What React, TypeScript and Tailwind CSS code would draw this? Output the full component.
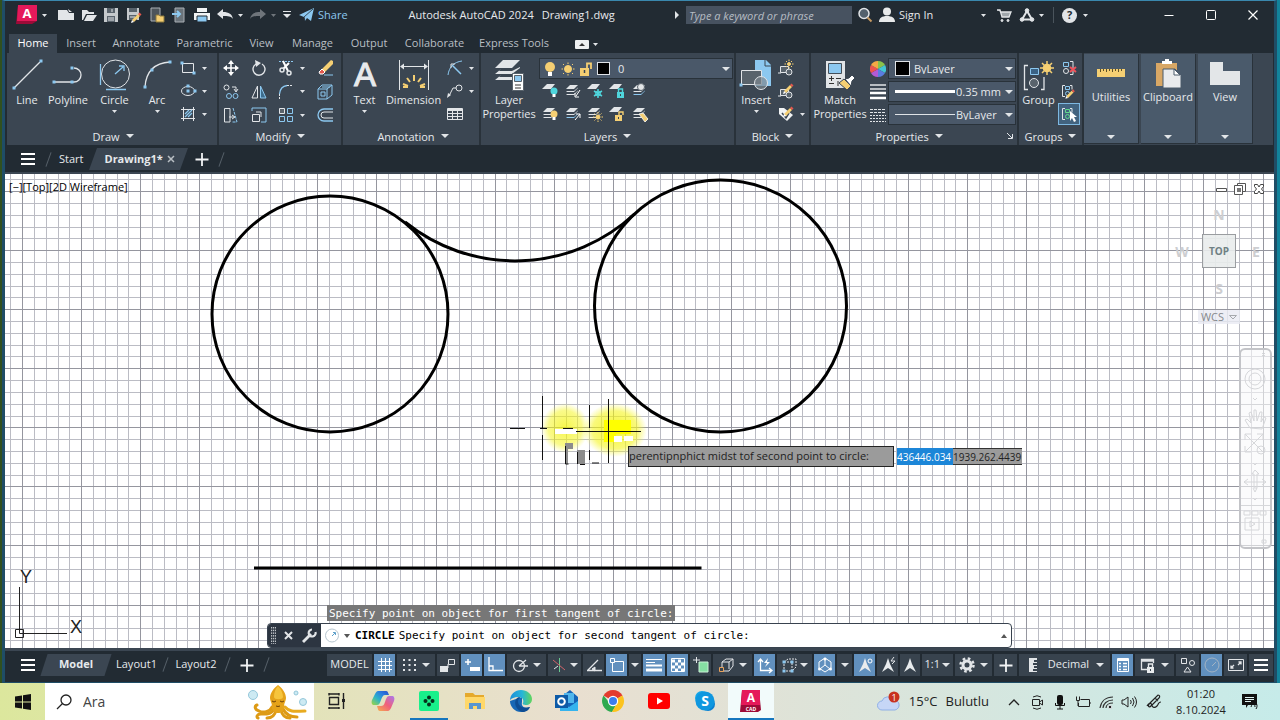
import React, { useState } from "react";
import clsx from "clsx";

type IconProps = { size?: number; children: React.ReactNode };

type Tool = { label: string; icon: React.ReactNode; caret?: boolean };

const LIGHT = "#e2e5e8";
const BLUE = "#8cc8f0";
const GOLD = "#f5cf73";

const Icon = ({ size = 16, children }: IconProps) => (
  <svg
    width={size}
    height={size}
    viewBox={`0 0 ${size} ${size}`}
    fill="none"
    stroke={LIGHT}
    className="shrink-0 overflow-visible"
  >
    {children}
  </svg>
);

const Caret = ({ small = false }: { small?: boolean }) =>
  small ? (
    <svg width="5" height="3" viewBox="0 0 5 3" className="shrink-0">
      <path d="M0 0h5L2.500 3z" fill={LIGHT} />
    </svg>
  ) : (
    <svg width="8" height="4" viewBox="0 0 8 4" className="shrink-0">
      <path d="M0 0h8L4 4z" fill={LIGHT} />
    </svg>
  );

const Node = ({ x, y }: { x: number; y: number }) => (
  <rect x={x - 1.5} y={y - 1.5} width="3" height="3" fill={BLUE} stroke="none" />
);

const Pencil = () => (
  <g stroke="none">
    <path d="M7 9l6-6 2 2-6 6z" fill={GOLD} />
    <path d="M13 3l1.500-1.500 2 2L15 5z" fill="#e2574c" />
    <path d="M7 9l-1 3 3-1z" fill="#fff" />
  </g>
);

const Sheets = ({ accent = LIGHT }: { accent?: string }) => (
  <g stroke="none">
    <path d="M5 2h8l-4 4H1z" fill={LIGHT} />
    <path d="M3.500 6.500L1 9h8l4-4v-.5L9 8H2z" fill={LIGHT} />
    <path d="M3.500 9.500L1 12h8l4-4v-.5L9 11H2z" fill={accent} />
  </g>
);

const OneSheet = () => <path d="M5 1h8L9 6H0z" fill={LIGHT} stroke="none" />;

const Bulb = ({ x, y, color }: { x: number; y: number; color: string }) => (
  <g stroke="none">
    <circle cx={x} cy={y} r="3.5" fill={color} />
    <rect x={x - 1.5} y={y + 3} width="3" height="3" fill="#fff" />
  </g>
);

const SunMark = ({ x, y, r = 2 }: { x: number; y: number; r?: number }) => (
  <g stroke={GOLD}>
    <circle cx={x} cy={y} r={r} fill={GOLD} />
    <path
      d={`M${x} ${y - r - 3}v1.500M${x} ${y + r + 1.5}v1.500M${x - r - 3} ${y}h1.500M${x + r + 1.5} ${y}h1.500M${x - r - 1.5} ${y - r - 1.5}l1 1M${x + r + 0.5} ${y + r + 0.5}l1 1M${x - r - 1.5} ${y + r + 1.5}l1-1M${x + r + 0.5} ${y - r - 0.5}l1-1`}
    />
  </g>
);

const Lock = ({ x, y, color, open = false }: { x: number; y: number; color: string; open?: boolean }) => (
  <g>
    <rect x={x} y={y} width="7" height="6" fill={color} stroke="none" />
    <path
      d={open ? `M${x + 4} ${y}v-3h4v3` : `M${x + 1.5} ${y}v-3h4v3`}
      stroke={color}
      strokeWidth="1.4"
    />
    <path d={`M${x + 3.5} ${y + 2}v2`} stroke="#3b4652" />
  </g>
);

const Burger = () => (
  <Icon>
    <path d="M1 3h14M1 8h14M1 13h14" stroke="#fff" strokeWidth="2" />
  </Icon>
);

const Plus = () => (
  <Icon>
    <path d="M8 2v13M1.500 8.500h13" stroke="#f2f4f5" strokeWidth="1.8" />
  </Icon>
);

const Slash = () => <span className="h-[15px] w-px rotate-[20deg] bg-[#566069]" />;

/* ---------- title bar ---------- */

const fileTools: Tool[] = [
  {
    label: "New",
    icon: <Icon><path d="M0 3h9l2 3h5v7H0z" fill={LIGHT} stroke="none" /><path d="M10 2l4 3h-3z" fill={LIGHT} stroke="none" /></Icon>,
  },
  {
    label: "Open",
    icon: <Icon><path d="M1 3h5l2 2h5v2H5l-3 6H1z" fill={LIGHT} stroke="none" /><path d="M6 8h10l-4 6H3z" fill={LIGHT} stroke="none" /></Icon>,
  },
  {
    label: "Save",
    icon: <Icon><path d="M1 1h14v14H1z" fill="#c5c9cc" stroke="none" /><path d="M4 1h8v5H4zM4 9h8v6H4z" fill="#59636c" stroke="none" /><path d="M5 11h6M5 13h6M9 2v3" /></Icon>,
  },
  {
    label: "Save As",
    icon: <Icon><path d="M1 1h12v12H1z" fill="#c5c9cc" stroke="none" /><path d="M3 1h8v4H3zM3 8h8v5H3z" fill="#59636c" stroke="none" /><path d="M4 10h5" /><g transform="translate(-1 4)"><Pencil /></g></Icon>,
  },
  {
    label: "Open from Web & Mobile",
    icon: <Icon><path d="M2 1h9v13H2z" fill="#4d555b" stroke="#a9afb4" /><path d="M7 8h3l1 1h4v6H7z" fill={GOLD} stroke="#8d7a3e" /></Icon>,
  },
  {
    label: "Save to Web & Mobile",
    icon: <Icon><path d="M4 1h9v14H4z" fill="#6a737a" stroke="#a9afb4" /><path d="M1 7h7M6 4l3 3-3 3" stroke={BLUE} strokeWidth="2" /></Icon>,
  },
  {
    label: "Plot",
    icon: <Icon><path d="M3 1h10v4H3zM0 6h16v7H0z" fill="#f1f3f4" stroke="none" /><path d="M3 9h10v6H3z" fill={BLUE} stroke="#222b33" /></Icon>,
  },
];

const TitleBar = () => (
  <header className="flex h-[28px] items-center text-[11px]">
    <button aria-label="Application menu" className="ml-[11px] flex w-[34px] items-center gap-1">
      <svg width="22" height="20" viewBox="0 0 22 20">
        <path d="M2 1h18l1 15-5 3H0z" fill="#9d0b38" />
        <path d="M2 0h19v16H1z" fill="#e5195a" />
        <text x="11" y="13" textAnchor="middle" fontFamily="Open Sans" fontWeight="700" fontSize="13" fill="#fff">A</text>
      </svg>
      <Caret small />
    </button>
    <div className="ml-[5px] grid w-[158px] grid-cols-7 justify-items-center">
      {fileTools.map((t) => (
        <button key={t.label} aria-label={t.label}>{t.icon}</button>
      ))}
    </div>
    <button aria-label="Undo" className="ml-1 flex items-center gap-[5px]">
      <Icon><path d="M0 7l6-5v3c6 0 9 2 10 7-2-3-5-3-10-3v3z" fill={LIGHT} stroke="none" /></Icon>
      <Caret small />
    </button>
    <button aria-label="Redo" className="ml-[7px] flex items-center gap-[5px] opacity-40">
      <Icon><path d="M16 7l-6-5v3c-6 0-9 2-10 7 2-3 5-3 10-3v3z" fill={LIGHT} stroke="none" /></Icon>
      <Caret small />
    </button>
    <button aria-label="Customize toolbar" className="ml-[7px]">
      <svg width="8" height="8" viewBox="0 0 8 8">
        <path d="M0 .5h8" stroke={LIGHT} />
        <path d="M0 3h8L4 7z" fill={LIGHT} />
      </svg>
    </button>
    <button className="ml-2 flex items-center gap-[3px] text-[#8cc8f0]">
      <Icon><path d="M0 8L15 1l-3 13-4-3-2 3-1-4z" fill={BLUE} stroke="none" /><path d="M14 2L5 10l1 4" stroke="#222b33" strokeWidth=".8" /></Icon>
      Share
    </button>
    <h1 className="ml-[61px] flex gap-2">
      <span>Autodesk AutoCAD 2024</span>
      <span>Drawing1.dwg</span>
    </h1>
    <div className="ml-auto flex items-center">
      <svg width="5" height="8" viewBox="0 0 5 8" className="mr-1.5">
        <path d="M0 0l4 4-4 4z" fill={LIGHT} />
      </svg>
      <input
        aria-label="Search"
        placeholder="Type a keyword or phrase"
        className="h-[18px] w-[166px] bg-[#475260] px-[3px] italic text-white outline-none placeholder:text-[#b6bcc3]"
      />
      <button aria-label="Search help" className="ml-[5px]">
        <Icon><circle cx="7" cy="6.500" r="5" fill="#53616d" strokeWidth="1.500" /><path d="M10.500 10.500l4 4" stroke="#c59a62" strokeWidth="2" /></Icon>
      </button>
      <button className="ml-[6px] flex items-center gap-[4px]">
        <Icon><circle cx="8" cy="4.500" r="4" fill="#e8eaeb" stroke="none" /><path d="M0 15c0-4 3-6 8-6s8 2 8 6z" fill="#e8eaeb" stroke="none" /></Icon>
        <span className="w-[78px] text-left">Sign In</span>
        <Caret small />
      </button>
      <button aria-label="App store" className="ml-2.5">
        <Icon><path d="M1 3h3l2 7h7l2-5H5" fill="#9fa6ab" strokeWidth="1.300" /><circle cx="6" cy="13.500" r="1" fill={LIGHT} /><circle cx="12" cy="13.500" r="1" fill={LIGHT} /></Icon>
      </button>
      <button aria-label="Autodesk App" className="ml-[7px] flex items-center gap-1">
        <Icon><path d="M8 4L3 12.500h10z" strokeWidth="2" /><g fill={LIGHT}><circle cx="8" cy="3.500" r="1.800" /><circle cx="3" cy="12.500" r="1.800" /><circle cx="13" cy="12.500" r="1.800" /></g></Icon>
        <Caret small />
      </button>
      <span className="ml-[9px] h-4 w-px bg-[#4a545c]" />
      <button aria-label="Help" className="ml-2 flex items-center gap-[6px]">
        <span className="flex size-[15px] items-center justify-center rounded-full bg-[#e2e5e8] font-bold text-[#222b33]">?</span>
        <Caret small />
      </button>
    </div>
    <div className="ml-[60px] flex">
      <button aria-label="Minimize" className="flex w-[42px] justify-center"><Icon><path d="M3.500 8.500h9" stroke="#fff" /></Icon></button>
      <button aria-label="Restore" className="flex w-[42px] justify-center"><Icon><rect x="3.500" y="3.500" width="9" height="9" rx="1" stroke="#fff" /></Icon></button>
      <button aria-label="Close" className="flex w-[42px] justify-center"><Icon><path d="M3.500 3.500l9 9M12.500 3.500l-9 9" stroke="#fff" strokeWidth="1.200" /></Icon></button>
    </div>
  </header>
);

const ribbonTabs = [
  { name: "Home", width: "w-[48px]" },
  { name: "Insert", width: "w-[48px]" },
  { name: "Annotate", width: "w-[62px]" },
  { name: "Parametric", width: "w-[75px]" },
  { name: "View", width: "w-[39px]" },
  { name: "Manage", width: "w-[63px]" },
  { name: "Output", width: "w-[50px]" },
  { name: "Collaborate", width: "w-[81px]" },
  { name: "Express Tools", width: "w-[78px]" },
];

/* ---------- ribbon ---------- */

const modifyTools: Tool[] = [
  { label: "Move", icon: <Icon><path d="M8 2v12M2 8h12" stroke="#fff" strokeWidth="1.500" /><path d="M8 0l3 4H5zM8 16l3-4H5zM0 8l4-3v6zM16 8l-4-3v6z" fill="#fff" stroke="none" /></Icon> },
  { label: "Rotate", icon: <Icon><path d="M5 4a6 6 0 1 0 6 0" strokeWidth="1.400" /><path d="M4 0l6 3-5 4z" fill={LIGHT} stroke="none" /></Icon> },
  { label: "Trim", caret: true, icon: <Icon><path d="M1 1.500h14" stroke={BLUE} strokeDasharray="2 1" /><path d="M5 1l5 10M11 3l-6 6" stroke="#fff" strokeWidth="2" /><circle cx="4" cy="10" r="2" strokeWidth="1.500" /><circle cx="11" cy="13" r="2" strokeWidth="1.500" /></Icon> },
  { label: "Erase", icon: <Icon><path d="M5 9l9-9 2 1v3l-8 8z" fill={GOLD} stroke="none" /><path d="M5 9l3 3-2 2H3l-1-2z" fill="#e2574c" stroke="#fff" /><path d="M7 15h9" stroke={BLUE} /></Icon> },
  { label: "Copy", icon: <Icon><circle cx="3.500" cy="3.500" r="2.500" /><path d="M9 3h4v4M11 5l2 3 2-3" /><g stroke={BLUE}><circle cx="6" cy="12" r="2.500" /><circle cx="12.500" cy="12" r="2.500" /></g></Icon> },
  { label: "Mirror", icon: <Icon><path d="M6.500 2v12H1z" /><path d="M9.500 2v12H15z" stroke={BLUE} fill="#3e6d8d" /></Icon> },
  { label: "Fillet", caret: true, icon: <Icon><path d="M1.500 10C2 5 5 2 9 1.500" stroke={BLUE} strokeWidth="1.300" /><path d="M9 1.500h6M1.500 10v6" strokeDasharray="2 1" /></Icon> },
  { label: "Explode", icon: <Icon><path d="M1 5h9v10H1zM4 8h4v4H4z" stroke={BLUE} /><path d="M1 5l4-4h10l-5 4M15 1v10l-5 4M5 3h8" stroke={BLUE} /></Icon> },
  { label: "Stretch", icon: <Icon><path d="M1.500 1.500H7V15H1.500zM6 10h5M9 8l3 2-3 2" /><path d="M10 1l4 14H9" stroke={BLUE} strokeDasharray="3 1" /></Icon> },
  { label: "Scale", icon: <Icon><path d="M1 4V1h14v14h-5" stroke={BLUE} /><path d="M1.500 7.500h7v7h-7z" /><path d="M5 5h5v5" /></Icon> },
  { label: "Array", caret: true, icon: <Icon><path d="M1.500 1.500h5v5h-5z" fill="#59636c" /><g stroke={BLUE}><path d="M9.500 1.500h5v5h-5zM1.500 9.500h5v5h-5zM9.500 9.500h5v5h-5z" /></g></Icon> },
  { label: "Offset", icon: <Icon><path d="M16 2H7a6 6 0 0 0 0 12h9" stroke={BLUE} strokeWidth="1.300" /><path d="M16 5H7a3 3 0 0 0 0 6h9" /></Icon> },
];

const drawTools: Tool[] = [
  { label: "Rectangle", caret: true, icon: <Icon><path d="M2.500 3.500h11v9h-11z" /><Node x={2} y={3} /><Node x={14} y={13} /></Icon> },
  { label: "Ellipse", caret: true, icon: <Icon><ellipse cx="8" cy="8" rx="6.500" ry="4.500" /><Node x={8} y={8} /><Node x={15} y={8} /><Node x={8} y={3} /></Icon> },
  { label: "Hatch", caret: true, icon: <Icon><path d="M3.500 1v14M13.500 1v14M1 3.500h14M1 12.500h14" /><path d="M5 8l4-4M5 11l7-7M8 11l4-4" stroke={BLUE} strokeWidth="1.300" /></Icon> },
];

const annotationTools: Tool[] = [
  { label: "Linear", caret: true, icon: <Icon><path d="M1 15C2 7 7 2 15 1" stroke={BLUE} /><path d="M5 5l9 9" stroke={BLUE} strokeWidth="1.500" /><path d="M4 8V4h4" /></Icon> },
  { label: "Leader", caret: true, icon: <Icon><circle cx="12" cy="5" r="3" /><path d="M9 5H6l-4 8" /><path d="M0 15l1-5 3 2z" fill={LIGHT} stroke="none" /></Icon> },
  { label: "Table", icon: <Icon><path d="M.5 2.500h15v11H.5zM.5 7.500h15M.5 10.500h15M5.500 5v9M10.500 5v9" /><path d="M1 4h14" strokeWidth="2" /></Icon> },
];

const layerTools: Tool[] = [
  { label: "Off", icon: <Icon><OneSheet /><Bulb x={12} y={8} color="#4fd5dc" /></Icon> },
  { label: "Isolate", icon: <Icon><Sheets /><path d="M15 7l-4 6M10 10v4h4" stroke="#fff" /></Icon> },
  { label: "Freeze", icon: <Icon><OneSheet /><path d="M11 6v9M7 8l8 5M15 8l-8 5" stroke="#4fd5dc" strokeWidth="1.500" /><circle cx="11" cy="10.500" r="2.500" stroke="#4fd5dc" /></Icon> },
  { label: "Lock", icon: <Icon><OneSheet /><Lock x={8} y={9} color="#4fd5dc" /></Icon> },
  { label: "Make Current", icon: <Icon><Sheets accent={BLUE} /><circle cx="9" cy="4" r="3.500" fill="#e3e6e8" stroke="#59636c" /></Icon> },
  { label: "Turn All On", icon: <Icon><Sheets /><Bulb x={12} y={8} color={GOLD} /></Icon> },
  { label: "Unisolate", icon: <Icon><Sheets accent={BLUE} /><path d="M10 14l5-6M11 8h4v4" stroke="#fff" /></Icon> },
  { label: "Thaw All", icon: <Icon><Sheets /><SunMark x={11} y={11} /></Icon> },
  { label: "Unlock", icon: <Icon><OneSheet /><Lock x={6} y={9} color={GOLD} open /></Icon> },
  { label: "Match Layer", icon: <Icon><Sheets /><path d="M7 8l4-1 5 6-3 3z" fill={GOLD} stroke="#fff" strokeWidth=".8" /></Icon> },
];

const BlockShape = () => (
  <g>
    <path d="M2.500 6.500h8v6h-8z" fill="#59636c" />
    <circle cx="11" cy="12" r="3" fill="#59636c" />
    <path d="M0 13h3" />
  </g>
);

const blockTools: Tool[] = [
  { label: "Create Block", icon: <Icon><BlockShape /><SunMark x={11} y={4} r={1.5} /></Icon> },
  { label: "Edit Block", icon: <Icon><BlockShape /><g transform="translate(-1 -1)"><Pencil /></g></Icon> },
  { label: "Edit Attributes", caret: true, icon: <Icon><path d="M1 2h5l9 7-6 6-8-7z" fill="#f1f3f4" stroke="none" /><path d="M4 7l4 5 3-5" stroke="#3b4652" strokeWidth="1.500" /><g transform="translate(-1 -1)"><Pencil /></g></Icon> },
];

const GroupShape = ({ color = BLUE }: { color?: string }) => (
  <g>
    <path d="M4 2.500H1.500v11H4M9 2.500h2v4" />
    <path d="M4.500 3.500h4v3h-4z" stroke={color} />
    <circle cx="6.500" cy="10.500" r="2" stroke={color} />
  </g>
);

const groupTools: Tool[] = [
  { label: "Ungroup", icon: <Icon><path d="M9 1.500h3v13H9" /><path d="M2.500 2.500h5v4h-5z" stroke={BLUE} /><circle cx="5" cy="11" r="2.500" /><path d="M9 7l6 5M15 7l-6 5" stroke="#f0535b" strokeWidth="2" /></Icon> },
  { label: "Group Edit", icon: <Icon><GroupShape /><g transform="translate(-1 5) scale(.9)"><Pencil /></g></Icon> },
  { label: "Group Selection On/Off", icon: <Icon><GroupShape color="#62d98d" /><path d="M9 5v10l2-3 2 4 2-1-2-4h3z" fill="#fff" stroke="none" /></Icon> },
];

const SmallTool = ({ tool }: { tool: Tool }) => (
  <button aria-label={tool.label} className="flex h-[22px] items-center gap-1.5">
    {tool.icon}
    {tool.caret && <Caret small />}
  </button>
);

const BigTool = ({ tool, className }: { tool: Tool; className: string }) => (
  <button className={clsx("flex shrink-0 flex-col items-center text-[11px] leading-[14px]", className)}>
    <span className="flex h-[36px] items-center">{tool.icon}</span>
    <span className="whitespace-pre">{tool.label}</span>
    {tool.caret && <span className="flex h-2 items-center"><Caret small /></span>}
  </button>
);

const Panel = ({ title, className, children, launcher }: { title: string; className: string; children: React.ReactNode; launcher?: boolean }) => (
  <section className={clsx("flex shrink-0 flex-col border-r-2 border-[#29323a]", className)}>
    <div className="flex h-[74px] pt-[4px]">{children}</div>
    <div className="flex h-[18px] items-center">
      <button className="mx-auto flex items-center gap-[6px] text-[11px] leading-none">
        {title}
        <Caret />
      </button>
      {launcher && (
        <button aria-label="Properties palette" className="mr-1">
          <svg width="6" height="6" viewBox="0 0 6 6" fill="none" stroke={LIGHT}><path d="M0 0l5 5M5.500 1v4.500H1" /></svg>
        </button>
      )}
    </div>
  </section>
);

const collapsedPanels: Tool[] = [
  {
    label: "Utilities",
    icon: <Icon size={30}><path d="M1 9h28v8H1z" fill={GOLD} stroke="none" /><path d="M4.500 9v3M7.500 9v2M10.500 9v3M13.500 9v2M16.500 9v3M19.500 9v2M22.500 9v3M25.500 9v2" stroke="#5c4f27" /></Icon>,
  },
  {
    label: "Clipboard",
    icon: <Icon size={30}><path d="M3 3h21v23H3z" fill="#d8a765" stroke="none" /><path d="M9 4V1h3v-2h4v2h3v3z" fill="#fff" stroke="none" /><path d="M10 9h12l6 6v13H10z" fill="#e9ebed" stroke="#4a5a6b" /><path d="M21 9v6h6z" fill="#fff" stroke="#4a5a6b" /></Icon>,
  },
  {
    label: "View",
    icon: <Icon size={30}><path d="M0 2h13v9h17v14H0z" fill="#e3e6e8" stroke="none" /></Icon>,
  },
];

const PropertySelect = ({ label, options, children, className }: { label: string; options: string[]; children: React.ReactNode; className?: string }) => (
  <div className={clsx("flex h-[21px] items-center border border-[#29323a] bg-[#4a5869] pr-0.5", className)}>
    {children}
    <select aria-label={label} className="min-w-0 flex-1 appearance-none bg-transparent text-[11px] leading-none outline-none">
      {options.map((o) => (
        <option key={o}>{o}</option>
      ))}
    </select>
    <Caret />
  </div>
);

const Ribbon = () => (
  <div className="mx-0.5 mr-px flex h-[92px] overflow-hidden bg-[#3b4652]">
    <Panel title="Draw" className="w-[212px] pl-0.5">
      <BigTool className="w-[36px]" tool={{ label: "Line", icon: <Icon size={32}><path d="M3 29L29 3" strokeWidth="1.300" /><Node x={3} y={29} /><Node x={30} y={2} /></Icon> }} />
      <BigTool className="w-[46px]" tool={{ label: "Polyline", icon: <Icon size={32}><path d="M2 23h20a7 7 0 0 0 0-14" strokeWidth="1.300" /><Node x={2} y={23} /><Node x={20} y={23} /><Node x={20} y={9} /></Icon> }} />
      <BigTool className="w-[47px]" tool={{ label: "Circle", caret: true, icon: <Icon size={32}><circle cx="16.500" cy="15" r="14" /><path d="M1.500 5v21M7 30.500h20M16 15l8-7M20 7h5v5" stroke={BLUE} strokeWidth="1.300" /></Icon> }} />
      <BigTool className="w-[38px]" tool={{ label: "Arc", caret: true, icon: <Icon size={32}><path d="M4 28C5 12 14 4 29 3" strokeWidth="1.300" /><Node x={4} y={28} /><Node x={11} y={11} /><Node x={29} y={3} /></Icon> }} />
      <div className="ml-1 flex flex-col gap-px">
        {drawTools.map((t) => <SmallTool key={t.label} tool={t} />)}
      </div>
    </Panel>

    <Panel title="Modify" className="w-[124px]">
      <div className="grid grid-cols-[28px_27px_39px_16px] gap-y-px pl-[4px]">
        {modifyTools.map((t) => <SmallTool key={t.label} tool={t} />)}
      </div>
    </Panel>

    <Panel title="Annotation" className="w-[138px] pl-[4px]">
      <BigTool className="w-[35px]" tool={{ label: "Text", caret: true, icon: <Icon size={32}><text x="16" y="27" textAnchor="middle" fontFamily="Liberation Sans" fontSize="33" fill="#e8eaec" stroke="#e8eaec">A</text></Icon> }} />
      <BigTool
        className="w-[63px]"
        tool={{ label: "Dimension", icon: <Icon size={32}><path d="M1.500 1v30M30.500 1v30M3 7.500h26" /><path d="M2 7.500l4-3v6zM30 7.500l-4-3v6z" fill={LIGHT} stroke="none" /><path d="M16 16v6M9 19l3 4M23 19l-3 4M5 25l5 2M27 25l-5 2M5 28h5M22 28h5" stroke={GOLD} strokeWidth="2" /></Icon> }}
      />
      <div className="ml-[2px] flex flex-col gap-px">
        {annotationTools.map((t) => <SmallTool key={t.label} tool={t} />)}
      </div>
    </Panel>

    <Panel title="Layers" className="w-[255px]">
      <BigTool
        className="w-[56px]"
        tool={{
          label: "Layer\nProperties",
          icon: <Icon size={32}><path d="M10 1h17l-8 8H2zM8 10l-6 5h17l8-6v-1l-8 4H6zM8 16l-6 5h17l8-6v-1l-8 4H6z" fill={LIGHT} stroke="none" /><path d="M19.500 14.500h11v17h-11z" fill="#fff" stroke="#59636c" /><path d="M21.500 16.500h7v6h-7z" fill={BLUE} stroke="#59636c" /><path d="M22 26h6M22 29h6" stroke="#333" /></Icon>,
        }}
      />
      <div className="ml-0.5 w-[194px]">
        <PropertySelect label="Layer" options={["0"]} className="mt-px pl-[3px]">
          <div className="mr-[8px] flex gap-[4px]">
            <Icon size={14}><circle cx="7" cy="5" r="5" fill={GOLD} stroke="none" /><path d="M5 10h4v4H5z" fill="#fff" stroke="none" /></Icon>
            <Icon size={14}><SunMark x={7} y={7} r={3.5} /></Icon>
            <Icon size={14}><path d="M1 6h9v8H1z" fill={GOLD} stroke="none" /><path d="M8 6V1.500h4V7" stroke={GOLD} strokeWidth="1.800" /><path d="M5.500 8v3" stroke="#3b4652" strokeWidth="1.500" /></Icon>
            <span className="size-[13px] border border-[#dfe3e7] bg-black" />
          </div>
        </PropertySelect>
        <div className="grid w-[112px] grid-cols-5 gap-y-px justify-items-center pt-px">
          {layerTools.map((t) => <SmallTool key={t.label} tool={t} />)}
        </div>
      </div>
    </Panel>

    <Panel title="Block" className="w-[75px]">
      <BigTool
        className="w-[40px]"
        tool={{
          label: "Insert", caret: true,
          icon: <Icon size={32}><path d="M15 1h11l5 5v21H15z" fill={BLUE} stroke="none" /><path d="M25 1v6h6" stroke="#3b4652" /><path d="M1.500 11.500h20v14h-20z" fill="#59636c" /><circle cx="21" cy="24" r="6.500" fill="#7c868f" fillOpacity=".7" /><Node x={1} y={26} /></Icon>,
        }}
      />
      <div className="ml-0.5 flex flex-col gap-px">
        {blockTools.map((t) => <SmallTool key={t.label} tool={t} />)}
      </div>
    </Panel>

    <Panel title="Properties" className="w-[208px]" launcher>
      <BigTool
        className="w-[58px]"
        tool={{
          label: "Match\nProperties",
          icon: <Icon size={32}><path d="M2 2h19v27H2z" fill={LIGHT} stroke="none" /><path d="M4.500 4.500h13v10h-13z" fill={BLUE} stroke="#44505b" /><path d="M5 19.500h5M7.500 17v5M12 19.500h5M5 24.500h5M14 22v5" stroke="#333" /><path d="M15 24l5-4 7 7-4 4z" fill={GOLD} stroke="#3b4652" /><path d="M21 20l4-1 3-3 3 3-3 3-1 5z" fill="#fff" stroke="#3b4652" /></Icon>,
        }}
      />
      <div className="ml-px flex flex-1 gap-[2px] pt-px pr-px">
        <div className="flex w-[16px] flex-col items-center gap-[7px] pt-[3px]">
          <svg width="16" height="16" viewBox="0 0 16 16">
            <path d="M8 8V0a8 8 0 0 1 7 4z" fill="#8bc34a" />
            <path d="M8 8l7-4a8 8 0 0 1 0 8z" fill="#43c6d4" />
            <path d="M8 8l7 4a8 8 0 0 1-7 4z" fill="#5a7de0" />
            <path d="M8 8v8a8 8 0 0 1-7-4z" fill="#b35ad6" />
            <path d="M8 8l-7 4a8 8 0 0 1 0-8z" fill="#ef5350" />
            <path d="M8 8L1 4a8 8 0 0 1 7-4z" fill="#f6a945" />
          </svg>
          <Icon><path d="M0 1h16M0 5h16" strokeWidth="1.500" /><path d="M0 9h16M0 14h16" stroke="#fff" strokeWidth="2.500" /></Icon>
          <Icon><path d="M0 2.500h16M0 5.500h16" strokeDasharray="3 1" /><path d="M0 8.500h16M0 11.500h16M0 14.500h16" strokeDasharray="2 1" /></Icon>
        </div>
        <div className="flex flex-1 flex-col gap-[2px]">
          <PropertySelect label="Object color" options={["ByLayer"]} className="pl-[6px]">
            <span className="mr-[4px] size-[15px] border border-[#dfe3e7] bg-black" />
          </PropertySelect>
          <PropertySelect label="Lineweight" options={["0.35 mm"]} className="pl-[6px]">
            <span className="mr-px h-[3px] w-[60px] shrink-0 bg-white" />
          </PropertySelect>
          <PropertySelect label="Linetype" options={["ByLayer"]} className="pl-[6px]">
            <span className="mr-px h-px w-[60px] shrink-0 bg-[#dfe3e7]" />
          </PropertySelect>
        </div>
      </div>
    </Panel>

    <Panel title="Groups" className="w-[65px]">
      <BigTool
        className="w-[39px]"
        tool={{
          label: "Group",
          icon: <Icon size={32}><path d="M5 6.500H1.500v24H5M18 30.500h3V18" strokeWidth="1.300" /><path d="M7.500 9.500h8v6h-8z" stroke={BLUE} fill="#3a6285" /><circle cx="11" cy="24" r="4.500" fill="#59636c" /><g stroke={GOLD} strokeWidth="1.500"><circle cx="24" cy="9" r="3.500" fill={GOLD} /><path d="M24 2v14M17 9h14M19 4l10 10M29 4L19 14" /></g></Icon>,
        }}
      />
      <div className="flex flex-col gap-px">
        {groupTools.map((t, i) => (
          <div key={t.label} className={clsx("flex h-[22px] w-[22px] items-center justify-center", i === 2 && "border border-[#7db8e2] bg-[#42637f]")}>
            <SmallTool tool={t} />
          </div>
        ))}
      </div>
    </Panel>

    <div className="flex gap-[2px] pt-px pb-px">
      {collapsedPanels.map((t) => (
        <button key={t.label} className="flex w-[55px] flex-col items-center border-r border-b border-[#29323a] bg-[#4a5a6b] pt-[6px] text-[11px] leading-[14px]">
          <span>{t.icon}</span>
          <span>{t.label}</span>
          <span className="mt-auto mb-1"><Caret /></span>
        </button>
      ))}
    </div>
  </div>
);

/* ---------- drawing area ---------- */

const GRID = 59.07 / 5;

// every fifth line is a major one
const gridLines = (first: number, count: number) =>
  Array.from({ length: count }, (_, i) => ({
    at: Math.round(first + i * GRID) + 0.5,
    major: i % 5 === 0,
  }));

const columns = gridLines(-37, 160);
const rows = gridLines(132, 120);

const gridPath = (major: boolean) =>
  columns.filter((c) => c.major === major).map((c) => `M${c.at} 170V1500`).join("") +
  rows.filter((r) => r.major === major).map((r) => `M0 ${r.at}H1850`).join("");

const Drawing = () => (
  <svg className="block h-full w-full" viewBox="5 174 1270 474" preserveAspectRatio="xMinYMin slice">
    <defs>
      <radialGradient id="glow">
        <stop offset="0" stopColor="#f2f200" stopOpacity=".95" />
        <stop offset=".7" stopColor="#f5f520" stopOpacity=".7" />
        <stop offset="1" stopColor="#f8f840" stopOpacity="0" />
      </radialGradient>
    </defs>
    <path d={gridPath(false)} stroke="#bbbcc4" />
    <path d={gridPath(true)} stroke="#95969f" />

    <g fill="none" stroke="#000" strokeWidth="3">
      <circle cx="330" cy="314" r="118" />
      <circle cx="720.500" cy="306" r="126" />
      <path d="M405 222A175.400 175.400 0 0 0 634.500 214" />
      <path d="M254 568h447.500" />
    </g>

    <ellipse cx="565" cy="428" rx="24" ry="25" fill="url(#glow)" opacity=".75" />
    <ellipse cx="615" cy="430" rx="32" ry="27" fill="url(#glow)" opacity=".85" />
    <path d="M604 420h27v14h-15v8h-12z" fill="#ffff00" />
    <path d="M555 429h22v5h-22zM614 436h8v6h-8zM624 436h9v5h-9z" fill="#fff" />
    <g stroke="#111" fill="none">
      <path d="M542.500 396v33M542.500 435v25M589.500 405v23M589.500 450v10M608.500 399v64" />
      <path d="M510 428.500h15M540 428.500h7M563 428.500h10M576 431.500h65" />
    </g>
    <path d="M565 443h8v6h-5v15h-3zM577 450h8v14h-8z" fill="#8c8c8c" />
    <path d="M565.500 446v18h3M577.500 452v12M580 464.500h5M592 463h7" stroke="#111" fill="none" />

    {/* UCS icon */}
    <g fill="none" stroke="#222">
      <path d="M19.500 587v46.500H67" />
      <path d="M15.500 629.500h8v8h-8z" />
    </g>
    <g fontFamily="Liberation Sans" fontSize="18" fill="#222">
      <text x="20" y="583">Y</text>
      <text x="70" y="633">X</text>
    </g>
  </svg>
);

const compass = [
  { name: "N", place: "col-start-2 row-start-1" },
  { name: "W", place: "col-start-1 row-start-2" },
  { name: "E", place: "col-start-3 row-start-2" },
  { name: "S", place: "col-start-2 row-start-3" },
];

const ViewCube = () => (
  <div className="absolute top-[31px] right-[8px] flex flex-col items-center">
    <div className="grid grid-cols-[20px_54px_20px] grid-rows-[18px_56px_18px] place-items-center text-[14px] font-bold text-[#cdced1]">
      {compass.map((c) => (
        <button key={c.name} className={c.place}>{c.name}</button>
      ))}
      <button className="col-start-2 row-start-2 size-[34px] border border-[#9a9da0] bg-[#e9ecec]/90 text-[10px] text-[#6f8083]">TOP</button>
    </div>
    <button className="mt-[13px] flex h-[14px] items-center gap-[5px] bg-[#e9eaf2]/80 px-[3px] text-[11px] text-[#85888c]">
      WCS
      <svg width="8" height="5" viewBox="0 0 8 5" fill="none" stroke="#a5a8ac"><path d="M.5 .5h7L4 4z" /></svg>
    </button>
  </div>
);

const NavBar = () => (
  <div className="absolute top-[174px] right-[2px] w-[33px] rounded-md border-2 border-[#c3c4c8] bg-[#f8f8fa]/60">
    <svg width="29" height="197" viewBox="0 0 29 197" fill="none" stroke="#d6d7da">
      <path d="M21 3l3 3M24 3l-3 3M12 48l2 2 2-2M12 113l2 2 2-2M12 148l2 2 2-2M0 54.500h29M0 155.500h29" />
      <circle cx="14" cy="29" r="10" />
      <circle cx="14" cy="29" r="6" />
      <path d="M9 78l-5-8 2-1 4 4-2-10 2-1 3 9V60h2l1 11 3-9h2l-1 10 3-5 2 1-4 11z" />
      <path d="M4 84l18 18M22 84L4 102M4 90v-6h6M16 84h6v6M4 96v6h6" />
      <circle cx="20" cy="100" r="4" />
      <path d="M14 120l-3 4h2v14h3v-14h2zM3 132h22M7 129l-4 3 4 3M21 129l4 3-4 3M12 138l2 4 2-4" />
      <path d="M3 161h6v4H3zM11 161h6v4h-6zM19 161h6v4h-6zM4 168h14v12H4zM9 171l5 3-5 3zM21 190h4v3h-4z" />
    </svg>
  </div>
);

const Viewport = () => (
  <main className="relative h-0 min-h-[474px] flex-1 overflow-hidden bg-white text-black">
    <Drawing />
    <button className="absolute top-[5px] left-[4px] text-[11px] leading-[15px]">[−][Top][2D Wireframe]</button>
    <div className="absolute top-[8px] right-[8px] flex gap-[5px]">
      <button aria-label="Minimize drawing"><Icon size={14}><path d="M2.500 6.500h10v3h-10z" stroke="#555" fill="#fff" /></Icon></button>
      <button aria-label="Restore drawing"><Icon size={14}><path d="M4.500 1.500h8v8h-8z" stroke="#555" fill="#fff" /><path d="M1.500 3.500h8v9h-8z" stroke="#555" fill="#fff" /><path d="M4 6h4v4H4z" fill="#777" stroke="none" /></Icon></button>
      <button aria-label="Close drawing"><Icon size={14}><path d="M2.500 2.500h3L7 5l1.500-2.500h3v2L9.500 7l2 2.500v2h-3L7 9l-1.500 2.500h-3v-2L4.500 7l-2-2.500z" stroke="#444" fill="#fff" /></Icon></button>
    </div>
    <ViewCube />
    <NavBar />

    {/* dynamic input */}
    <div className="absolute top-[272px] left-[623px] flex items-center">
      <label htmlFor="coordX" className="flex h-[21px] w-[266px] items-center overflow-hidden border border-[#222] bg-[#9b9b9b] text-[11px] whitespace-nowrap text-[#222]">
        perentipnphict midst tof second point to circle:
      </label>
      <input id="coordX" defaultValue="436446.034" className="ml-[3px] h-[17px] w-[56px] bg-[#1c86d8] text-[10px] text-white outline-none" />
      <input aria-label="Y coordinate" defaultValue="1939.262.4439" className="h-[17px] w-[69px] border-y border-[#333] bg-[#9b9b9b] text-[10px] text-[#222] outline-none" />
    </div>

    {/* command line */}
    <p className="absolute bottom-[27px] left-[322px] bg-[#777] px-0.5 pt-px font-['DejaVu_Sans_Mono',monospace] text-[11px] leading-[15px] text-white">
      Specify point on object for first tangent of circle:
    </p>
    <div className="absolute right-[262px] bottom-0 left-[262px] flex h-[25px] overflow-hidden rounded border border-[#38424e] bg-white">
      <div className="flex w-[53px] items-center gap-[8px] bg-[#2c3541] pl-[3px]">
        <svg width="5" height="17" viewBox="0 0 5 17" stroke={LIGHT} strokeDasharray="1.500 1.200"><path d="M.7 0v17M2.700 0v17M4.700 0v17" /></svg>
        <button aria-label="Close command line"><svg width="9" height="9" viewBox="0 0 9 9"><path d="M1 1l7 7M8 1L1 8" stroke={LIGHT} strokeWidth="2" /></svg></button>
        <button aria-label="Customize"><Icon><path d="M2 14l8-8" strokeWidth="2.800" /><path d="M14.500 4A3.500 3.500 0 1 1 11 1.500" strokeWidth="2.200" /></Icon></button>
      </div>
      <button aria-label="Recent commands" className="flex items-center gap-[3px] pl-1">
        <Icon><circle cx="7" cy="7.500" r="6.500" stroke="#b7c6cf" /><path d="M7 8l3-3M8 4.500h2.500V7" stroke="#5da0ca" /></Icon>
        <svg width="6" height="4" viewBox="0 0 6 4"><path d="M0 0h6L3 4z" fill="#555" /></svg>
      </button>
      <label htmlFor="command" className="flex items-center pt-0.5 pl-[5px] font-['DejaVu_Sans_Mono',monospace] text-[11px] font-bold">CIRCLE</label>
      <input
        id="command"
        defaultValue="Specify point on object for second tangent of circle:"
        className="min-w-0 flex-1 pt-0.5 pl-[4px] font-['DejaVu_Sans_Mono',monospace] text-[11px] outline-none"
      />
      <button aria-label="Show history" className="mr-[4px]">
        <svg width="6" height="4" viewBox="0 0 6 4"><path d="M0 4h6L3 0z" fill="#555" /></svg>
      </button>
    </div>
  </main>
);

/* ---------- status bar ---------- */

type StatusItem = { label: string; width: string; on?: boolean; caret?: boolean; text?: string; icon?: React.ReactNode };

const Compass = ({ mark }: { mark?: React.ReactNode }) => (
  <Icon><path d="M8 1l2 6 4 8-6-4-6 4 4-8z" fill="#e8ebed" stroke="none" />{mark}</Icon>
);

const statusItems: StatusItem[] = [
  { label: "Model space", width: "w-[45px]", text: "MODEL" },
  { label: "Grid", width: "w-[21px]", on: true, icon: <Icon><path d="M4.500 1v14M8.500 1v14M12.500 1v14M1 4.500h14M1 8.500h14M1 12.500h14" stroke="#fff" /></Icon> },
  { label: "Snap", width: "w-[38px]", caret: true, icon: <Icon><path d="M1 3h14M1 8h14M1 13h14" strokeWidth="2" strokeDasharray="2 3.500" /></Icon> },
  { label: "Infer constraints", width: "w-[22px]", icon: <Icon><path d="M0 9h8v6H0z" fill={LIGHT} stroke="none" /><path d="M8.500 2.500h6v5h-6zM8 7v4" /></Icon> },
  { label: "Dynamic input", width: "w-[21px]", on: true, icon: <Icon><path d="M4 2v6M1 5h6" stroke="#fff" strokeWidth="1.500" /><path d="M6 10h10v4H6z" fill="#fff" stroke="none" /></Icon> },
  { label: "Ortho", width: "w-[21px]", on: true, icon: <Icon><path d="M2 0v13.500h14M2 9h4v4" stroke="#fff" strokeWidth="1.300" /></Icon> },
  { label: "Polar tracking", width: "w-[39px]", caret: true, icon: <Icon><circle cx="7" cy="9" r="5.500" strokeWidth="1.300" /><path d="M7 9h9M7 9l7-6" strokeWidth="1.300" /></Icon> },
  { label: "Isodraft", width: "w-[33px]", caret: true, icon: <Icon><path d="M8.500 1v14" stroke="#69c88f" /><path d="M2 3l12 10" stroke="#d5646a" /><path d="M3 12l4-3" /></Icon> },
  { label: "Object snap tracking", width: "w-[21px]", icon: <Icon><path d="M1 13.500h15M2 13L12 3" strokeWidth="1.300" /><path d="M6 12l3-2v4z" fill={LIGHT} /></Icon> },
  { label: "Object snap", width: "w-[21px]", on: true, icon: <Icon><path d="M3.500 4.500h11v10h-11z" stroke="#fff" /><path d="M1.500 1.500h4v4h-4z" fill="#6190be" stroke="#fff" /></Icon> },
  { label: "Object snap settings", width: "w-[12px]", caret: true },
  { label: "Lineweight", width: "w-[22px]", on: true, icon: <Icon><path d="M0 2.500h16M0 5.500h9" stroke="#fff" /><path d="M0 8.500h16" stroke="#fff" strokeWidth="2" /><path d="M0 13h16" stroke="#fff" strokeWidth="3" /></Icon> },
  { label: "Transparency", width: "w-[21px]", on: true, icon: <Icon><path d="M1.500 1.500h13v13h-13z" stroke="#fff" /><path d="M2 4h12M2 10h12" stroke="#fff" strokeWidth="3" strokeDasharray="3 3" /><path d="M5 7h9M5 13h9" stroke="#fff" strokeWidth="3" strokeDasharray="3 3" /></Icon> },
  { label: "Selection cycling", width: "w-[21px]", icon: <Icon><path d="M6 5h9v10H6z" fill="#86e0a3" stroke="#c9f2d6" /><path d="M3.500 0v6M0 3h7" /></Icon> },
  { label: "3D object snap", width: "w-[39px]", caret: true, icon: <Icon><path d="M4 5l4-3h7v7l-4 5H5M4 5v6M4 5h7v7M11 5l4-3" /><path d="M1.500 10.500h4v4h-4z" stroke="#e6a15c" /></Icon> },
  { label: "Dynamic UCS", width: "w-[21px]", on: true, icon: <Icon><path d="M3.500 2v11.500H14M1 5l2.500-3L6 5M12 11l3 2.500-3 2.500" stroke="#fff" strokeWidth="1.300" /><path d="M11 1L7 6h3l-2 4 5-5h-3z" fill="#fff" stroke="none" /></Icon> },
  { label: "Selection filtering", width: "w-[35px]", caret: true, icon: <Icon><path d="M3 5h8v9H3zM3 5l4-3h8v8l-4 4" strokeDasharray="2 1" /><Node x={3} y={5} /><Node x={11} y={5} /><Node x={3} y={14} /><Node x={11} y={14} /></Icon> },
  { label: "Gizmo", width: "w-[21px]", on: true, icon: <Icon><path d="M8 1l6 4v6l-6 4-6-4V5zM8 2v6M8 8l5 4M8 8l-5 4" stroke="#fff" /><g fill="#fff" stroke="none"><circle cx="8" cy="2" r="1.500" /><circle cx="2.500" cy="12" r="1.500" /><circle cx="13.500" cy="12" r="1.500" /></g></Icon> },
  { label: "Gizmo settings", width: "w-[15px]", caret: true },
  { label: "Annotation visibility", width: "w-[21px]", on: true, icon: <Compass mark={<circle cx="13" cy="4" r="2" stroke="#fff" />} /> },
  { label: "AutoScale", width: "w-[21px]", icon: <Compass mark={<path d="M14 0l-3 4h4l-3 3" />} /> },
  { label: "Annotation", width: "w-[20px]", icon: <Compass /> },
  { label: "Annotation scale", width: "w-[31px]", caret: true, text: "1:1" },
  { label: "Workspace", width: "w-[37px]", caret: true, icon: <Icon><circle cx="8" cy="8" r="4" strokeWidth="3" /><circle cx="8" cy="8" r="6.500" strokeWidth="2.500" strokeDasharray="2.600 2.500" /></Icon> },
  { label: "Annotation monitor", width: "w-[23px]", icon: <Plus /> },
  { label: "Units", width: "w-[91px]", caret: true, text: "Decimal", icon: <Icon><path d="M4 1h8v2H9v2h3v1H8v2h4v1H9v2h3v1H8v2h4v1H4z" fill={LIGHT} stroke="none" /></Icon> },
  { label: "Quick properties", width: "w-[21px]", on: true, icon: <Icon><path d="M2.500 1.500h11v13h-11z" stroke="#fff" /><path d="M2 3h12" stroke="#fff" strokeWidth="2" /><path d="M4 6.500h2M8 6.500h4M4 9.500h2M8 9.500h4M4 12.500h2M8 12.500h4" stroke="#fff" strokeWidth="1.500" /></Icon> },
  { label: "Lock UI", width: "w-[39px]", caret: true, icon: <Icon><path d="M8 12.500H1.500v-10h12V6M1 4h13" strokeWidth="1.300" /><Lock x={7} y={10} color="#e8ebed" /></Icon> },
  { label: "Isolate objects", width: "w-[23px]", icon: <Icon><path d="M1.500 1.500h5v5h-5zM4 15l3.500-5L11 15z" /><circle cx="12" cy="6" r="2.500" /></Icon> },
  { label: "Graphics performance", width: "w-[21px]", on: true, icon: <Icon><circle cx="8" cy="8" r="7" stroke="#a4b4c4" /><path d="M8 9l4-4" stroke="#a4b4c4" /></Icon> },
  { label: "Clean screen", width: "w-[23px]", icon: <Icon><path d="M.5 2.500h15v11H.5z" /><path d="M3 11l3-3M3 8.500V11h2.500M13 5l-3 3M10.500 5H13v2.500" strokeWidth="1.300" /></Icon> },
  { label: "Customization", width: "w-[24px]", icon: <Burger /> },
];

const layouts = [
  { name: "Model", width: "w-[64px]" },
  { name: "Layout1", width: "w-[57px]" },
  { name: "Layout2", width: "w-[62px]" },
];

const StatusBar = ({ layout, onLayout }: { layout: string; onLayout: (name: string) => void }) => (
  <footer className="flex h-[34px] items-center border-t-[3px] border-[#3b4652] pr-px pb-1">
    <button aria-label="Layouts" className="mr-[8px] ml-[15px]"><Burger /></button>
    {layouts.map((l) => (
      <button
        key={l.name}
        onClick={() => onLayout(l.name)}
        className={clsx(
          "relative flex h-[22px] shrink-0 items-center justify-center text-[11px]",
          l.width,
          layout === l.name && "font-bold"
        )}
      >
        {layout === l.name ? (
          <span className="absolute inset-0 -skew-x-[18deg] bg-[#3b4652]" />
        ) : (
          <span className="absolute -right-px"><span className="block h-[15px] w-px rotate-[20deg] bg-[#566069]" /></span>
        )}
        <span className="relative">{l.name}</span>
      </button>
    ))}
    <button aria-label="New layout" className="mr-[11px] ml-[12px]"><Plus /></button>
    <Slash />
    <div className="ml-auto flex gap-0.5">
      {statusItems.map((s) => (
        <button
          key={s.label}
          aria-label={s.label}
          className={clsx(
            "flex h-[22px] shrink-0 items-center text-[11px]",
            s.caret ? "justify-evenly" : "justify-center",
            s.on ? "bg-[#6190be]" : "bg-[#38434e]",
            s.width
          )}
        >
          {s.icon}
          {s.text}
          {s.caret && <Caret />}
        </button>
      ))}
    </div>
  </footer>
);

/* ---------- taskbar ---------- */

type TaskApp = Tool & { state?: "running" | "active" };

const taskApps: TaskApp[] = [
  { label: "Task View", icon: <Icon size={20}><path d="M2 4.500V2M2 3h10M12 2v2.500M2.500 6.500h9v7h-9zM2 16v2M2 17h10M12 16v2M16.500 2v16" stroke="#222" strokeWidth="1.400" /><path d="M15 8h3v3h-3z" fill="#222" stroke="none" /></Icon> },
  {
    label: "Copilot",
    icon: (
      <svg width="24" height="24" viewBox="0 0 24 24">
        <defs>
          <linearGradient id="cpA" x1="0" y1="1" x2="1" y2="0"><stop offset="0" stopColor="#a4d83c" /><stop offset=".4" stopColor="#2cb3c9" /><stop offset=".7" stopColor="#2b7ce0" /><stop offset="1" stopColor="#2b4fc4" /></linearGradient>
          <linearGradient id="cpB" x1="1" y1="0" x2="0" y2="1"><stop offset="0" stopColor="#a878f0" /><stop offset=".5" stopColor="#f0607a" /><stop offset="1" stopColor="#f5b04e" /></linearGradient>
        </defs>
        <path d="M7 2h8c2 0 2 2 3 4h-4c-2 0-3 2-4 5s-2 5-4 5H3c-2 0-3-2-2-5l3-6c1-2 2-3 3-3z" fill="url(#cpA)" />
        <path d="M17 22H9c-2 0-2-2-3-5h4c2 0 3-1 4-4s2-6 4-6h3c2 0 3 2 2 5l-3 7c-1 2-2 3-3 3z" fill="url(#cpB)" />
      </svg>
    ),
  },
  { label: "Recorder", state: "running", icon: <Icon size={20}><rect width="20" height="20" rx="2" fill="#19f08b" stroke="none" /><g fill="#06301c" stroke="none"><circle cx="10" cy="6.500" r="2" /><circle cx="10" cy="13.500" r="2" /><circle cx="6.500" cy="10" r="2" /><circle cx="13.500" cy="10" r="2" /></g></Icon> },
  { label: "File Explorer", icon: <Icon size={20}><path d="M0 2h8l2 2h9v14H0z" fill="#e5a92c" stroke="none" /><path d="M0 6h20v12H0z" fill="#ffd869" stroke="none" /><path d="M4 18v-6h12v6h-4v-3H8v3z" fill="#5a96cf" stroke="none" /></Icon> },
  {
    label: "Edge",
    icon: (
      <svg width="24" height="24" viewBox="0 0 24 24">
        <defs><linearGradient id="edge" x1="0" y1="0" x2="1" y2="0"><stop offset="0" stopColor="#1b8fd8" /><stop offset=".55" stopColor="#27b5d8" /><stop offset="1" stopColor="#62d65a" /></linearGradient></defs>
        <path d="M1 12c0 6 5 11 11 11 4 0 7-2 9-5-6 2-9-1-8-5V8z" fill="#1767b5" />
        <path d="M1 12C1 5 6 1 12 1s11 4 11 9c0 4-3 6-6 6-2 0-4-1-3-2 1-2 0-6-4-6-5 0-9 2-9 4z" fill="url(#edge)" />
        <path d="M10 8c-6 2-5 12 3 15 4 0 7-2 8-5-6 2-12 0-12-6 0-2 2-3 2-4z" fill="#0e4d93" />
      </svg>
    ),
  },
  { label: "Outlook", icon: <Icon size={24}><path d="M6 8l9-7 8 7v14H6z" fill="#1463b8" stroke="none" /><path d="M9 4h10v10H9z" fill="#4fb5ec" stroke="none" /><path d="M5 12l9 6 9-6v10H5z" fill="#35b3ee" stroke="none" /><path d="M0 6h13v13H0z" fill="#0d5aa7" stroke="none" /><circle cx="6.500" cy="12.500" r="3.300" stroke="#fff" strokeWidth="2" /></Icon> },
  { label: "Chrome", icon: <Icon size={24}><g stroke="none"><path d="M12 12L2.500 6.500a11 11 0 0 1 19 0z" fill="#e33b2e" /><path d="M12 12h-5L2.500 6.500A11 11 0 0 0 11 23l5-8z" fill="#2da94f" /><path d="M12 12l9.500-5.500A11 11 0 0 1 11 23l5-9z" fill="#fcc31e" /><circle cx="12" cy="12" r="5.200" fill="#fff" /><circle cx="12" cy="12" r="4" fill="#3b7ded" /></g></Icon> },
  { label: "YouTube", icon: <Icon size={24}><rect x="1" y="4" width="22" height="16" rx="3" fill="#f00" stroke="none" /><path d="M10 8.500l6 3.500-6 3.500z" fill="#fff" stroke="none" /></Icon> },
  { label: "Skype", icon: <Icon size={24}><circle cx="9" cy="9" r="7" fill="#12a5e8" stroke="none" /><circle cx="15" cy="15" r="7" fill="#0a7fd0" stroke="none" /><circle cx="12" cy="12" r="9.500" fill="#0f97df" stroke="none" /><text x="12" y="17" textAnchor="middle" fontFamily="Open Sans" fontWeight="700" fontSize="14" fill="#fff" stroke="none">S</text></Icon> },
  { label: "AutoCAD", state: "active", icon: <Icon size={24}><path d="M3 1h17l2 20-3 2H1z" fill="#9d0b38" stroke="none" /><path d="M3 1h18v15H2z" fill="#e5195a" stroke="none" /><g fontFamily="Open Sans" fontWeight="700" fill="#fff" stroke="none" textAnchor="middle"><text x="12" y="13" fontSize="12">A</text><text x="12" y="22" fontSize="5">CAD</text></g></Icon> },
];

const Octopus = () => (
  <svg width="62" height="36" viewBox="0 0 62 36" fill="none">
    <g stroke="#dd9a14" strokeWidth="3" strokeLinecap="round">
      <path d="M25 23c-2 5-9 6-13 4-4-1-5-5-2-6" />
      <path d="M27 25c-3 6-9 5-13 5-4 0-5 3-3 4" />
      <path d="M29 26c-1 5-4 8-9 8" />
      <path d="M34 26c1 5 4 8 9 8" />
      <path d="M36 25c3 6 9 8 14 8" />
      <path d="M38 23c5 6 12 4 20 4" stroke="#e8ab20" />
    </g>
    <path d="M31 1c4 3 8 8 8 13 0 3-2 5-2 8 0 5-2 7-6 7s-6-2-6-7c0-3-2-5-2-8 0-5 4-10 8-13z" fill="#e5a31a" />
    <path d="M31 2c3 3 5 7 5 11 0 3-9 3-9 0 0-4 1-8 4-11z" fill="#f6c53d" />
    <path d="M25 17q2 2 4 0M33 17q2 2 4 0M29 22q2 1 4 0" stroke="#6b4108" />
    <g fill="#cdeaf3" stroke="#94c7da"><circle cx="6" cy="11" r="4.500" /><circle cx="56" cy="18" r="3.500" /><circle cx="49" cy="9" r="2" /></g>
  </svg>
);

const trayIcons: Tool[] = [
  { label: "Show hidden icons", icon: <Icon><path d="M3 11l5-5 5 5" stroke="#222" strokeWidth="1.300" /></Icon> },
  { label: "Meet now", icon: <Icon><path d="M3.500 5.500h7v6h-7zM10.500 8l3-2v5l-3-2M4 3q4-2.500 8 0M4 14q4 2.500 8 0" stroke="#222" /></Icon> },
  { label: "Microphone", icon: <Icon><rect x="5" y="1" width="6" height="10" rx="2" fill="#111" stroke="none" /><path d="M3.500 9v2.500h9V9M8 11.500V15M5 15h6" stroke="#111" /></Icon> },
  { label: "Battery", icon: <Icon><path d="M5.500 5.500h9v7h-11V9M15 8v2M1.500 2.500v4h3v-4M3 6v6" stroke="#222" /></Icon> },
  { label: "Wi-Fi", icon: <Icon><path d="M2 14C3 7 8 3 15 3M5 14c0-4 4-8 10-8M8 14c0-3 3-5 7-5" stroke="#333" strokeWidth="1.200" /><circle cx="12" cy="13" r="1.800" fill="#222" /></Icon> },
  { label: "Volume", icon: <Icon><path d="M1 6h2l4-3v10L3 10H1zM9.500 6q1.500 2 0 4M11.500 4q3 4 0 8M13.500 2.500q4 5.500 0 11" stroke="#222" /></Icon> },
];

const Taskbar = () => (
  <nav className="flex h-[37px] items-stretch bg-linear-to-r from-[#dce79d] via-[#e9dfd0] via-45% to-[#c6ebe9] text-[#222]">
    <button aria-label="Start" className="flex w-[45px] items-center justify-center">
      <Icon><path d="M0 2.500l7-1v6H0zM8 1.300L16 0v7.500H8zM0 8.500h7v6l-7-1zM8 8.500h8V16l-8-1.300z" fill="#111" stroke="none" /></Icon>
    </button>
    <label className="flex w-[269px] items-center gap-[11px] bg-white pr-[5px] pl-[11px]">
      <Icon><circle cx="10" cy="6" r="5" stroke="#222" strokeWidth="1.300" /><path d="M6.500 9.500L1 15" stroke="#222" strokeWidth="1.300" /></Icon>
      <input aria-label="Search Windows" placeholder="Ara" className="min-w-0 flex-1 text-[14px] outline-none placeholder:text-[#444]" />
      <Octopus />
    </label>
    <div className="flex">
      {taskApps.map((a) => (
        <button
          key={a.label}
          aria-label={a.label}
          className={clsx(
            "flex items-center justify-center border-b-2",
            a.state === "running" ? "mx-1 w-[38px]" : "w-[46px]",
            a.state === "active" && "bg-[#f2fbfb]",
            a.state ? "border-[#1576be]" : "border-transparent"
          )}
        >
          {a.icon}
        </button>
      ))}
    </div>
    <button className="ml-auto flex items-center gap-2 text-[13px]">
      <svg width="24" height="22" viewBox="0 0 24 22">
        <path d="M5 19a4.500 4.500 0 0 1 0-9 6 6 0 0 1 11-1 5 5 0 1 1 2 10z" fill="#c6d6f6" stroke="#8fb0e6" />
        <circle cx="17" cy="6" r="5.500" fill="#c8321f" />
        <text x="17" y="9.500" textAnchor="middle" fontSize="9" fontFamily="Open Sans" fill="#fff">1</text>
      </svg>
      <span>15°C</span>
      <span>Bulutlu</span>
    </button>
    <div className="ml-[17px] flex items-center gap-[7px]">
      {trayIcons.map((t) => (
        <button key={t.label} aria-label={t.label}>{t.icon}</button>
      ))}
    </div>
    <button aria-label="Windows Ink" className="ml-[9px]">
      <Icon><path d="M1 12c2-4 6-3 4 0-2 2-4 0-1-3l8-8c2 0 2 2 1 3L6 11c0 3 3 3 5 1s1-4 4-4M9 4l3 3" stroke="#222" strokeWidth="1.200" /></Icon>
    </button>
    <time className="ml-[14px] flex w-[50px] flex-col items-center justify-center text-[11px] leading-[16px] whitespace-nowrap">
      <span>01:20</span>
      <span>8.10.2024</span>
    </time>
    <button aria-label="Notifications" className="mr-[22px] ml-[16px]">
      <Icon><path d="M0 0h15v11H6l-2 3v-3H0z" fill="#111" stroke="none" /><path d="M3 3.500h9M3 5.500h9M3 7.500h6" stroke="#dff2f1" /><path d="M9 13c1-4 4-4 4 0M11 9c4-1 5 3 3 6" stroke="#111" /></Icon>
    </button>
  </nav>
);

export default function App() {
  const [tab, setTab] = useState("Home");
  const [layout, setLayout] = useState("Model");

  return (
    <div className="flex min-h-screen flex-col font-['Open_Sans','Noto_Sans',sans-serif] text-[#e6e9ec]">
      <div className="flex flex-1 bg-linear-to-r from-[#31501f] from-50% to-[#12839b] to-50% px-0.5 pr-[3px]">
        <div className="flex min-w-0 flex-1 flex-col border-x-[3px] border-y border-[#1f4d66] border-t-[#3a88ae] bg-[#222b33]">
          <TitleBar />
          <div className="flex h-[24px] items-end pl-1 text-[11px]">
            {ribbonTabs.map((t) => (
              <button
                key={t.name}
                onClick={() => setTab(t.name)}
                className={clsx(
                  "h-[19px] shrink-0",
                  t.width,
                  tab === t.name ? "bg-[#3b4652] text-white" : "text-[#b9bfc4]"
                )}
              >
                {t.name}
              </button>
            ))}
            <button aria-label="Minimize ribbon" className="mb-1 ml-[22px] flex items-center gap-[4px]">
              <svg width="14" height="9" viewBox="0 0 14 9"><rect width="14" height="9" rx="1" fill="#eef0f1" /><path d="M4 6h6L7 3z" fill="#333" /></svg>
              <Caret small />
            </button>
          </div>
          <Ribbon />
          <div className="flex h-[29px] items-center border-b-2 border-[#3b4652] pt-px text-[11px]">
            <button aria-label="File tabs" className="mr-3 ml-[15px]"><Burger /></button>
            <Slash />
            <button className="ml-[10px]">Start</button>
            <div className="relative ml-[10px] flex h-[22px] w-[91px] items-center pl-[11px]">
              <span className="absolute inset-0 -skew-x-[20deg] bg-[#3b4652]" />
              <button className="relative w-[58px] text-left font-bold whitespace-nowrap">Drawing1*</button>
              <button aria-label="Close Drawing1" className="relative ml-[5px]">
                <svg width="8" height="8" viewBox="0 0 8 8"><path d="M1 1l6 6M7 1L1 7" stroke="#b9bfc4" strokeWidth="1.500" /></svg>
              </button>
            </div>
            <button aria-label="New drawing" className="mr-[11px] ml-[10px]"><Plus /></button>
            <Slash />
          </div>
          <Viewport />
          <StatusBar layout={layout} onLayout={setLayout} />
        </div>
      </div>
      <Taskbar />
    </div>
  );
}
